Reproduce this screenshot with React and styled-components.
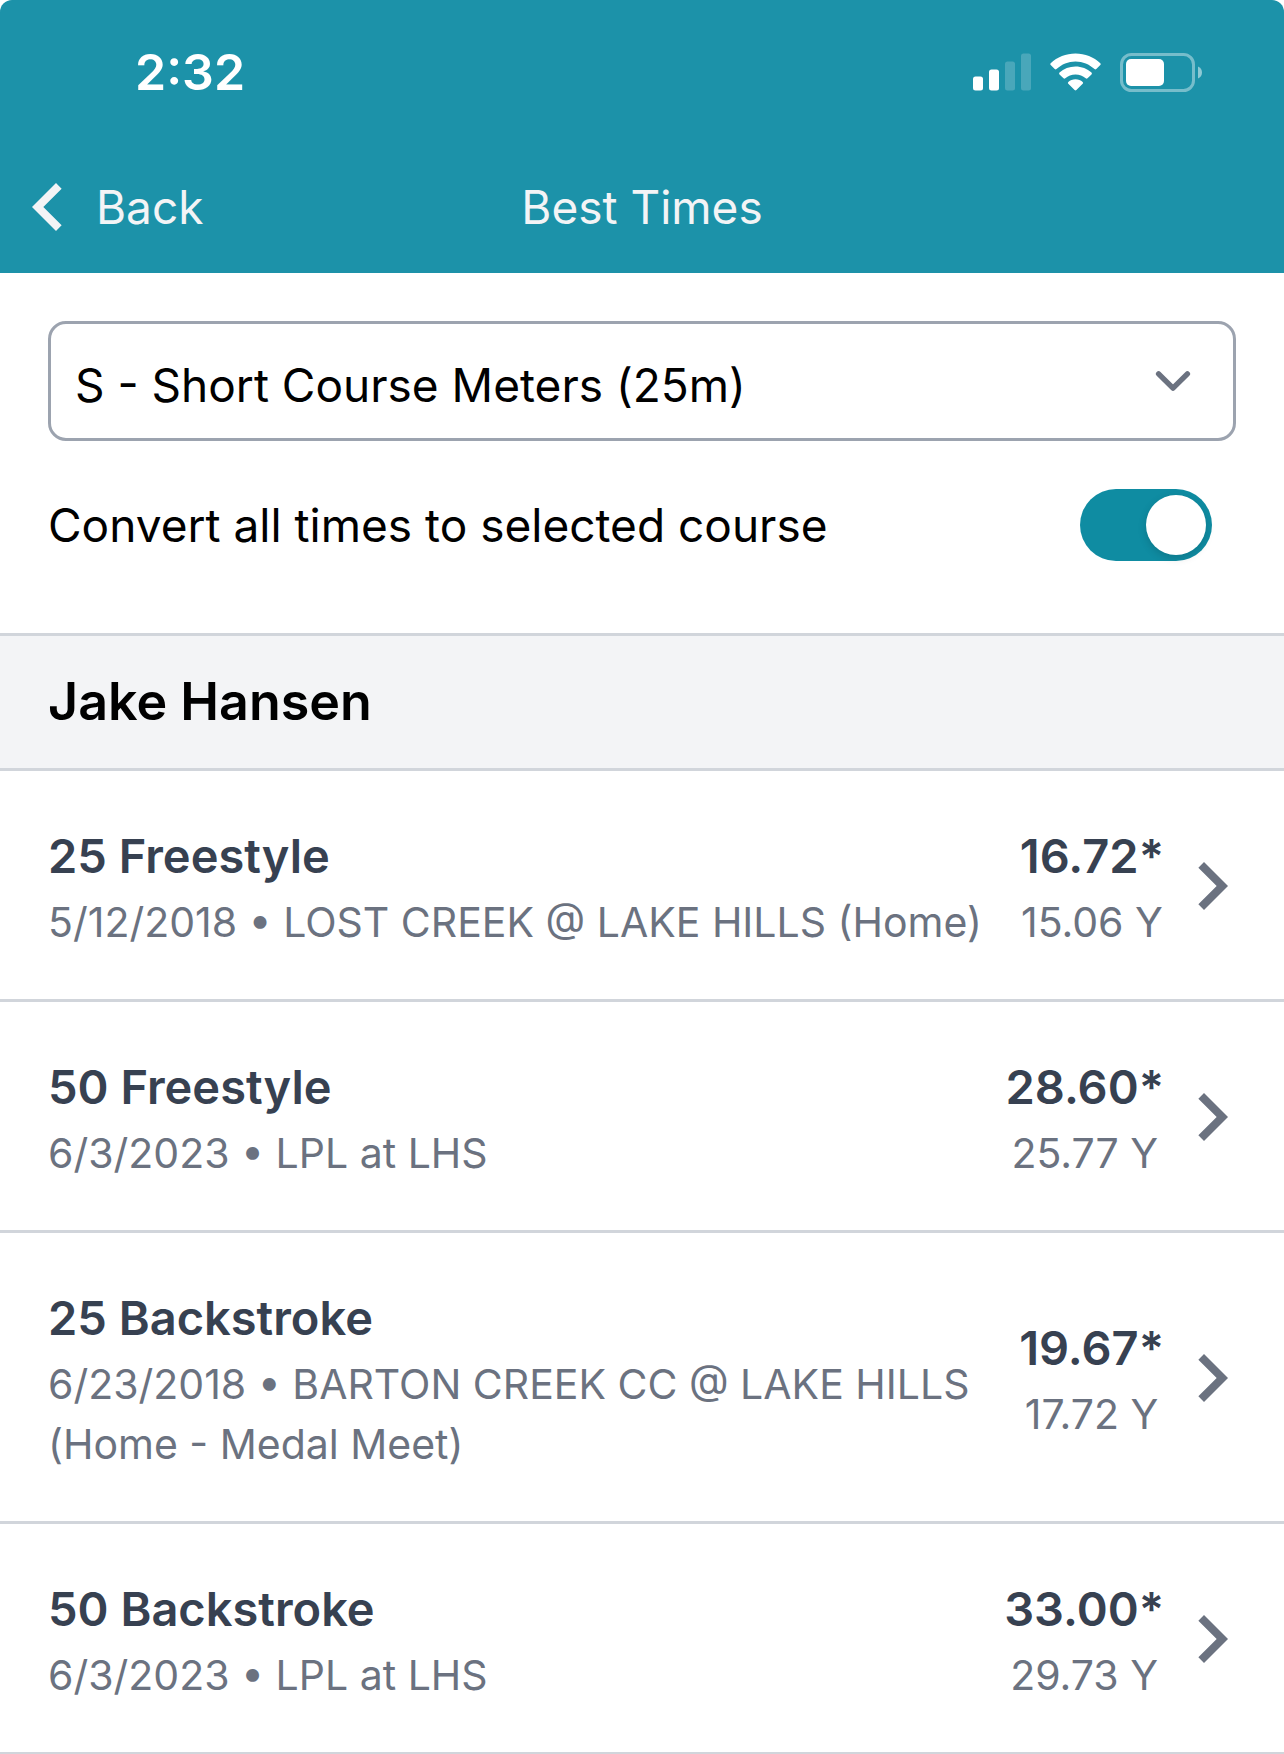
import { useState } from "react";
import styled, { createGlobalStyle } from "styled-components";

const courses = [
  { code: "S", label: "S - Short Course Meters (25m)" },
  { code: "Y", label: "Y - Short Course Yards (25y)" },
  { code: "L", label: "L - Long Course Meters (50m)" },
];

const bestTimes = [
  {
    event: "25 Freestyle",
    date: "5/12/2018",
    meet: "LOST CREEK @ LAKE HILLS (Home)",
    converted: "16.72*",
    original: "15.06 Y",
  },
  {
    event: "50 Freestyle",
    date: "6/3/2023",
    meet: "LPL at LHS",
    converted: "28.60*",
    original: "25.77 Y",
  },
  {
    event: "25 Backstroke",
    date: "6/23/2018",
    meet: "BARTON CREEK CC @ LAKE HILLS (Home - Medal Meet)",
    converted: "19.67*",
    original: "17.72 Y",
  },
  {
    event: "50 Backstroke",
    date: "6/3/2023",
    meet: "LPL at LHS",
    converted: "33.00*",
    original: "29.73 Y",
  },
];

function SignalIcon() {
  return (
    <svg width="58" height="38" viewBox="0 0 58 38" fill="#fff" aria-hidden="true">
      <rect x="0" y="23.5" width="10" height="14" rx="2.5" />
      <rect x="16" y="16.5" width="10" height="21" rx="2.5" />
      <rect x="32" y="8.5" width="10" height="29" rx="2.5" opacity="0.2" />
      <rect x="48" y="0.5" width="10" height="37" rx="2.5" opacity="0.2" />
    </svg>
  );
}

function WifiIcon() {
  return (
    <svg width="51" height="38" viewBox="0 0 51 38" fill="#fff" aria-hidden="true">
      <path d="M25.5 0.5C35 0.5 43.8 4.1 50.3 10.2Q51.2 11.1 50.3 12L46.3 16Q45.4 16.8 44.5 16C39.4 11.2 32.7 8.4 25.5 8.4S11.6 11.2 6.5 16Q5.6 16.8 4.7 16L0.7 12Q-0.2 11.1 0.7 10.2C7.2 4.1 16 0.5 25.5 0.5Z" />
      <path d="M25.5 13.5C31.6 13.5 37.2 15.8 41.5 19.6Q42.4 20.5 41.5 21.4L37.5 25.3Q36.6 26.1 35.7 25.3C33 22.9 29.4 21.4 25.5 21.4S18 22.9 15.3 25.3Q14.4 26.1 13.5 25.3L9.5 21.4Q8.6 20.5 9.5 19.6C13.8 15.8 19.4 13.5 25.5 13.5Z" />
      <path d="M25.5 26.3C28.3 26.3 30.8 27.3 32.7 28.9Q33.6 29.8 32.7 30.7L26.4 37Q25.5 37.8 24.6 37L18.3 30.7Q17.4 29.8 18.3 28.9C20.2 27.3 22.7 26.3 25.5 26.3Z" />
    </svg>
  );
}

function BatteryIcon() {
  return (
    <svg width="82" height="39" viewBox="0 0 82 39" fill="none" aria-hidden="true">
      <rect x="1.5" y="1.5" width="72" height="36" rx="10" stroke="#fff" strokeWidth="3" opacity="0.4" />
      <rect x="6" y="6" width="38" height="27" rx="5" fill="#fff" />
      <path d="M78 13.5C80.5 14.5 82 16.8 82 19.5S80.5 24.5 78 25.5Z" fill="#fff" opacity="0.5" />
    </svg>
  );
}

function ChevronLeft() {
  return (
    <svg width="30" height="48" viewBox="8 6 7.5 12" fill="currentColor" aria-hidden="true">
      <path d="M15.41 7.41L14 6l-6 6 6 6 1.41-1.41L10.83 12z" />
    </svg>
  );
}

function ChevronRight() {
  return (
    <svg width="30" height="48" viewBox="8.5 6 7.5 12" fill="currentColor" aria-hidden="true">
      <path d="M10 6L8.59 7.41 13.17 12l-4.58 4.59L10 18l6-6z" />
    </svg>
  );
}

function App() {
  const [course, setCourse] = useState("S");
  const [convert, setConvert] = useState(true);

  return (
    <>
      <GlobalStyle />
      <Header>
        <StatusBar>
          <Clock>2:32</Clock>
          <StatusIcons>
            <SignalIcon />
            <WifiIcon />
            <BatteryIcon />
          </StatusIcons>
        </StatusBar>
        <NavBar>
          <BackButton type="button">
            <ChevronLeft />
            Back
          </BackButton>
          <Title>Best Times</Title>
        </NavBar>
      </Header>
      <main>
        <Filters>
          <SelectWrap>
            <CourseSelect
              aria-label="Course"
              value={course}
              onChange={(e) => setCourse(e.target.value)}
            >
              {courses.map(({ code, label }) => (
                <option key={code} value={code}>
                  {label}
                </option>
              ))}
            </CourseSelect>
            <SelectArrow viewBox="0 0 20 20" aria-hidden="true">
              <path d="M6 8l4 4 4-4" />
            </SelectArrow>
          </SelectWrap>
          <ToggleRow>
            <label htmlFor="convert">Convert all times to selected course</label>
            <Toggle
              id="convert"
              type="checkbox"
              checked={convert}
              onChange={(e) => setConvert(e.target.checked)}
            />
          </ToggleRow>
        </Filters>
        <SwimmerName>Jake Hansen</SwimmerName>
        <TimesList>
          {bestTimes.map((time) => (
            <li key={time.event}>
              <TimeRow href="#">
                <EventInfo>
                  <Primary>{time.event}</Primary>
                  <Secondary>{`${time.date} • ${time.meet}`}</Secondary>
                </EventInfo>
                <Result>
                  <Primary>{time.converted}</Primary>
                  <Secondary>{time.original}</Secondary>
                </Result>
                <ChevronRight />
              </TimeRow>
            </li>
          ))}
        </TimesList>
      </main>
    </>
  );
}

const GlobalStyle = createGlobalStyle`
  * {
    box-sizing: border-box;
  }

  body {
    margin: 0;
    background-color: #fff;
    color: #000;
    font-family: Inter, "Liberation Sans", sans-serif;
    font-size: 46px;
    line-height: 72px;
  }

  svg {
    flex-shrink: 0;
  }
`;

const Header = styled.header`
  background-color: #1c92a9;
  border-radius: 12px 12px 0 0;
  color: #f3f4f6;
`;

const StatusBar = styled.div`
  display: flex;
  align-items: center;
  justify-content: space-between;
  height: 144px;
  padding: 0 82px 0 135px;
`;

const Clock = styled.span`
  color: #fff;
  font-size: 50px;
  font-weight: 600;
`;

const StatusIcons = styled.div`
  display: flex;
  align-items: center;
  gap: 19px;
`;

const NavBar = styled.nav`
  display: grid;
  grid-template-columns: 1fr auto 1fr;
  align-items: center;
  height: 129px;
  padding: 0 32px 3px;
`;

const BackButton = styled.button`
  display: flex;
  align-items: center;
  justify-self: start;
  gap: 34px;
  padding: 0;
  border: none;
  background: none;
  color: inherit;
  font: inherit;
`;

const Title = styled.h1`
  margin: 0;
  font-size: 46px;
  font-weight: 400;
`;

const Filters = styled.section`
  display: flex;
  flex-direction: column;
  gap: 48px;
  padding: 48px 48px 72px;
`;

const SelectWrap = styled.div`
  display: grid;
  align-items: center;

  > * {
    grid-area: 1 / 1;
  }
`;

const CourseSelect = styled.select`
  width: 100%;
  height: 120px;
  padding: 8px 120px 0 24px;
  appearance: none;
  border: 3px solid #9ca3af;
  border-radius: 18px;
  background-color: #fff;
  color: #000;
  font: inherit;
`;

const SelectArrow = styled.svg`
  justify-self: end;
  width: 72px;
  height: 72px;
  margin-right: 27px;
  fill: none;
  stroke: #6b7280;
  stroke-width: 1.5;
  stroke-linecap: round;
  stroke-linejoin: round;
  pointer-events: none;
`;

const ToggleRow = styled.div`
  display: flex;
  align-items: center;
  justify-content: space-between;
  padding-right: 24px;
`;

const Toggle = styled.input`
  display: flex;
  justify-content: flex-start;
  width: 132px;
  height: 72px;
  margin: 0;
  padding: 6px;
  appearance: none;
  border-radius: 36px;
  background-color: #d1d5db;

  &::before {
    content: "";
    width: 60px;
    height: 60px;
    border-radius: 50%;
    background-color: #fff;
    box-shadow: 0 3px 9px rgba(0, 0, 0, 0.15);
  }

  &:checked {
    justify-content: flex-end;
    background-color: #0f8ca2;
  }
`;

const SwimmerName = styled.h2`
  margin: 0;
  padding: 24px 48px;
  border-top: 3px solid #d1d5db;
  border-bottom: 3px solid #d1d5db;
  background-color: #f3f4f6;
  font-size: 52px;
  font-weight: 600;
  line-height: 84px;
`;

const TimesList = styled.ul`
  margin: 0;
  padding: 0;
  list-style: none;
`;

const TimeRow = styled.a`
  display: flex;
  align-items: center;
  padding: 49px 56px 47px 48px;
  border-bottom: 3px solid #d1d5db;
  color: #6b7280;
  text-decoration: none;
`;

const EventInfo = styled.div`
  flex: 1;
  min-width: 0;
`;

const Result = styled.div`
  margin: 0 34px 0 36px;
  text-align: center;
  white-space: nowrap;
`;

const Primary = styled.div`
  color: #374151;
  font-size: 47px;
  font-weight: 600;
`;

const Secondary = styled.div`
  font-size: 41px;
  line-height: 60px;
`;

export default App;
